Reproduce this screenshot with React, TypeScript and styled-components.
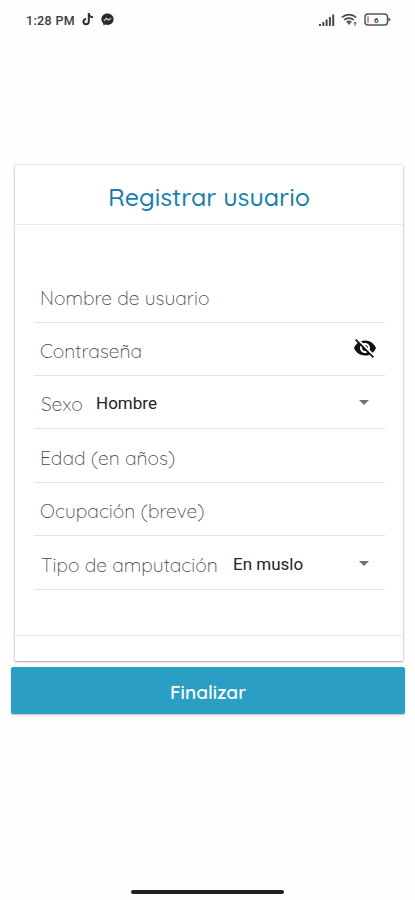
import React from "react";
import styled, { createGlobalStyle } from "styled-components";

const Global = createGlobalStyle`
  * { box-sizing: border-box; }
  body { margin: 0; background: #fefefe; }
`;

const brandFont = `Quicksand, Lato, sans-serif`;

const Screen = styled.div`
  width: 415px;
  height: 900px;
  display: flex;
  flex-direction: column;
  overflow: hidden;
  background: #fefefe;
`;

const StatusBar = styled.header`
  height: 40px;
  flex: none;
  display: flex;
  align-items: center;
  padding: 0 24px 0 26px;
  font: 500 12.5px Roboto, sans-serif;
  color: #3c3c3c;
`;

const Clock = styled.span`
  width: 56px;
  white-space: nowrap;
  letter-spacing: 0.35px;
`;

const StatusIcons = styled.div`
  display: flex;
  align-items: center;
  gap: 7px;
  padding-bottom: 1px;
`;

const SystemIcons = styled(StatusIcons)`
  margin-left: auto;
  gap: 6px;
`;

const Card = styled.main`
  width: 388px;
  height: 496px;
  flex: none;
  margin: 125px 0 0 15px;
  display: flex;
  flex-direction: column;
  background: #fff;
  border-radius: 1px;
  box-shadow: 0 0 2px 1px rgba(0, 0, 0, 0.11), 0 1px 2px rgba(0, 0, 0, 0.25);
`;

const CardHeader = styled.div`
  height: 60px;
  flex: none;
  display: flex;
  justify-content: center;
  border-bottom: 1px solid #ececec;
`;

const Title = styled.h1`
  margin: 0;
  font: 500 25px/64px ${brandFont};
  color: #167fab;
  white-space: nowrap;
`;

const Form = styled.form`
  height: 411px;
  flex: none;
  display: flex;
  flex-direction: column;
  padding: 44px 18px 0 19px;
  border-bottom: 1px solid #ececec;
`;

const Field = styled.div<{ $inset?: number; $height?: number }>`
  height: ${(p) => p.$height ?? 53}px;
  flex: none;
  display: flex;
  align-items: center;
  padding: 4px 8px 0 ${(p) => p.$inset ?? 6}px;
  border-bottom: 1px solid #e4e4e4;
`;

const Label = styled.label<{ $width: number }>`
  width: ${(p) => p.$width}px;
  font: 300 19.3px/24px ${brandFont};
  color: #484848;
  white-space: nowrap;
`;

const Value = styled.span`
  padding-bottom: 2px;
  font: 400 17px/22px Roboto, sans-serif;
  color: #242424;
`;

const Caret = styled.svg`
  width: 10px;
  height: 5px;
  margin: 0 8px 3px auto;
  fill: #707070;
`;

const EyeOff = styled.svg`
  width: 24px;
  height: 24px;
  margin: 0 0 6px auto;
  fill: #111;
`;

const Submit = styled.button`
  width: 394px;
  height: 47px;
  flex: none;
  margin: 6px 0 0 11px;
  padding: 3px 0 0;
  border: 0;
  border-radius: 2px;
  background: #2b9ec4;
  box-shadow: 0 1px 2px rgba(0, 0, 0, 0.25);
  color: #fff;
  font: 600 19px ${brandFont};
`;

const HomeIndicator = styled.div`
  width: 153px;
  height: 4px;
  flex: none;
  margin: 176px 0 0 131px;
  border-radius: 2px;
  background: #202020;
`;

const Dropdown = () => (
  <Caret viewBox="0 0 10 5">
    <path d="M0 0h10L5 5z" />
  </Caret>
);

export default function App() {
  return (
    <Screen>
      <Global />
      <StatusBar>
        <Clock>1:28 PM</Clock>
        <StatusIcons>
          <svg width="12" height="13" viewBox="0 0 12 13" fill="none" stroke="#303030" strokeWidth="2">
            <path d="M6.8 0v8.6a2.7 2.7 0 1 1-2.7-2.7M6.8.5c.2 2.4 1.8 3.6 4.2 3.7" />
          </svg>
          <svg width="13" height="13" viewBox="0 0 13 13">
            <path fill="#2b2b2b" d="M6.5.4C2.8.4.4 3 .4 6.3c0 1.8.8 3.3 2 4.4v1.9l2-1c.7.2 1.4.3 2.1.3 3.6 0 6.1-2.5 6.1-5.7S10.100.4 6.500.4z" />
            <path d="M2.800 8l2.500-2.700 2.100 1.700 2.800-1.700" fill="none" stroke="#ddd" strokeWidth="1.100" />
          </svg>
        </StatusIcons>
        <SystemIcons>
          <svg width="17" height="12" viewBox="0 0 17 12" stroke="#4a4a4a" strokeWidth="2">
            <path d="M2 12V10M5.300 12V8M8.600 12V5.500M11.900 12V3M15.200 12V0.500" />
          </svg>
          <svg width="17" height="13" viewBox="0 0 17 13" fill="none" stroke="#4a4a4a" strokeWidth="1.700">
            <path d="M.8 4.500a10.500 10.500 0 0 1 14.400 0M3.200 7a7 7 0 0 1 9.600 0M5.700 9.300a3.500 3.500 0 0 1 4.600 0" />
            <path d="M6 9.500h4L8 12z" fill="#4a4a4a" stroke="none" />
            <path d="M14 9v4M12.500 10.500L14 9l1.500 1.500" strokeWidth="0.900" />
          </svg>
          <svg width="27" height="13" viewBox="0 0 27 13">
            <rect x="1" y="1" width="22.500" height="11" rx="3" fill="#fff" stroke="#555" strokeWidth="1.500" />
            <path d="M24.500 4.200l2.200 2.300-2.200 2.300z" fill="#444" />
            <rect x="3" y="3" width="2" height="7" rx="1" fill="#eb8994" />
            <text x="10" y="9.500" fontFamily="Roboto, sans-serif" fontSize="8" fontWeight="700" fill="#444">6</text>
          </svg>
        </SystemIcons>
      </StatusBar>
      <Card>
        <CardHeader>
          <Title>Registrar usuario</Title>
        </CardHeader>
        <Form>
          <Field $height={54}>
            <Label $width={170}>Nombre de usuario</Label>
          </Field>
          <Field>
            <Label $width={102}>Contraseña</Label>
            <EyeOff viewBox="0 0 24 24">
              <path d="M12 7c2.760 0 5 2.240 5 5 0 .65-.13 1.260-.36 1.830l2.920 2.920c1.510-1.260 2.700-2.890 3.430-4.750-1.730-4.390-6-7.500-11-7.500-1.400 0-2.740.25-3.980.7l2.160 2.160C10.740 7.130 11.350 7 12 7zM2 4.270l2.280 2.280.46.46C3.080 8.300 1.780 10.020 1 12c1.730 4.390 6 7.500 11 7.500 1.550 0 3.030-.3 4.380-.84l.42.42L19.730 22 21 20.730 3.270 3 2 4.270zM7.530 9.800l1.550 1.550c-.05.21-.08.43-.08.65 0 1.660 1.340 3 3 3 .22 0 .44-.03.65-.08l1.550 1.550c-.67.33-1.410.53-2.200.53-2.760 0-5-2.240-5-5 0-.79.2-1.530.53-2.200zm4.310-.78l3.150 3.150.02-.16c0-1.660-1.340-3-3-3l-.17.01z" />
            </EyeOff>
          </Field>
          <Field $inset={7}>
            <Label $width={55}>Sexo</Label>
            <Value>Hombre</Value>
            <Dropdown />
          </Field>
          <Field $height={54}>
            <Label $width={136}>Edad (en años)</Label>
          </Field>
          <Field>
            <Label $width={165}>Ocupación (breve)</Label>
          </Field>
          <Field $inset={7} $height={54}>
            <Label $width={192}>Tipo de amputación</Label>
            <Value>En muslo</Value>
            <Dropdown />
          </Field>
        </Form>
      </Card>
      <Submit>Finalizar</Submit>
      <HomeIndicator />
    </Screen>
  );
}
